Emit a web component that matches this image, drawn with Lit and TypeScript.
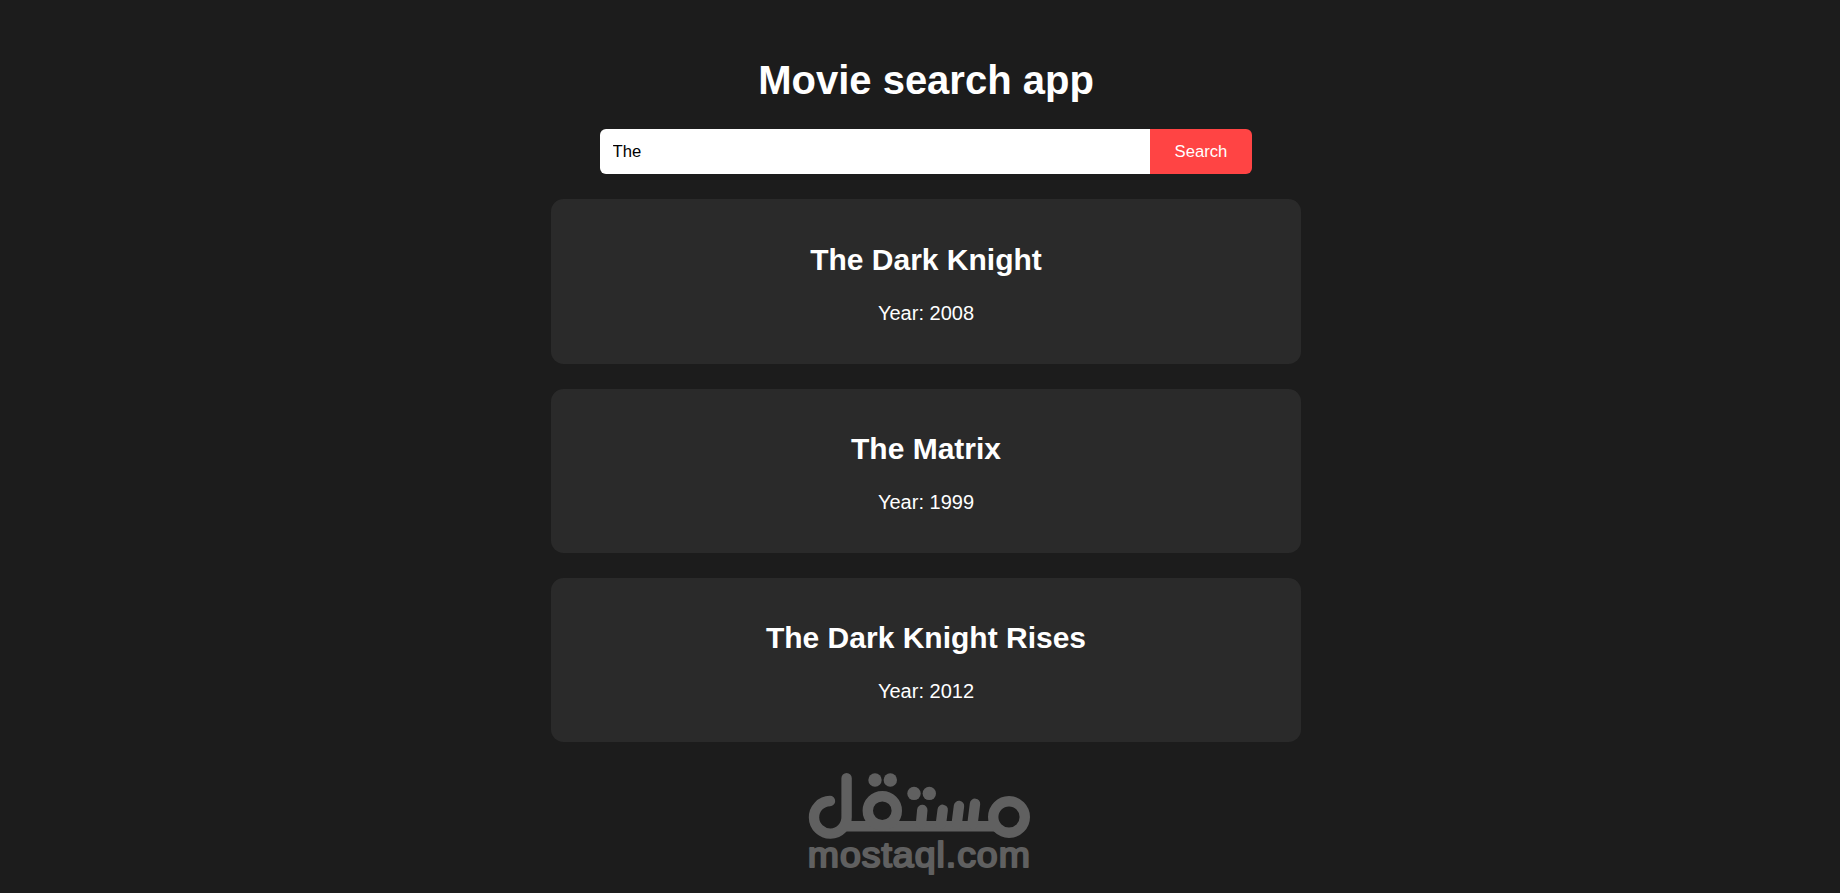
import { LitElement, html, css } from 'lit';
import { customElement, state } from 'lit/decorators.js';

interface Movie {
  title: string;
  year: number;
}

const MOVIES: Movie[] = [
  { title: 'The Dark Knight', year: 2008 },
  { title: 'Inception', year: 2010 },
  { title: 'The Matrix', year: 1999 },
  { title: 'Interstellar', year: 2014 },
  { title: 'The Dark Knight Rises', year: 2012 },
];

@customElement('mostaql-mark')
export class MostaqlMark extends LitElement {
  static styles = css`
    :host {
      display: block;
    }

    svg {
      display: block;
      overflow: visible;
    }

    .stroke {
      fill: none;
      stroke: #606060;
      stroke-width: 10.4;
      stroke-linecap: round;
      stroke-linejoin: round;
    }

    .bar {
      stroke-linecap: butt;
    }

    .dot {
      fill: #606060;
    }

    .name {
      fill: #606060;
      stroke: #606060;
      stroke-width: 2;
      stroke-linejoin: round;
      font: 34.4px 'Liberation Sans', Arial, sans-serif;
      letter-spacing: 0.9px;
    }
  `;

  render() {
    return html`
      <svg width="224" height="106" viewBox="0 0 224 106">
        <path class="stroke" d="M22 28A16.3 16.3 0 1 0 38.600 44V5.300" />
        <path class="stroke bar" d="M36 53.300H188" />
        <circle class="stroke" cx="74.300" cy="37.700" r="14.500" />
        <circle class="stroke" cx="201" cy="44" r="15.800" />
        <path class="stroke" d="M113 51L114.300 37M132.900 51L134.700 36.800M148.700 51L151 33M164.500 51L167 30.800" />
        <circle class="dot" cx="67" cy="7" r="6.700" />
        <circle class="dot" cx="82.300" cy="7" r="6.700" />
        <circle class="dot" cx="106" cy="20.400" r="6.700" />
        <circle class="dot" cx="121.300" cy="20.400" r="6.700" />
        <text class="name" x="-0.200" y="93.600" textLength="223" lengthAdjust="spacingAndGlyphs">mostaql.com</text>
      </svg>
    `;
  }
}

@customElement('app-root')
export class AppRoot extends LitElement {
  @state() query = 'The';
  @state() results: Movie[] = MOVIES.filter((m) => m.title.includes('The'));

  static styles = css`
    :host {
      display: block;
      box-sizing: border-box;
      height: 893px;
      padding: 57px 0 0 12px;
      overflow: hidden;
      background: #1c1c1c;
      color: #fff;
      font-family: 'Liberation Sans', Arial, sans-serif;
      text-align: center;
    }

    .container {
      width: 750px;
      margin: 0 auto;
    }

    h1 {
      margin: 0 0 26px;
      font-size: 40px;
      line-height: 46px;
    }

    .search {
      display: flex;
      width: 652px;
      height: 45px;
      margin: 0 auto 25.4px;
    }

    input,
    button {
      box-sizing: border-box;
      border: none;
      font-family: inherit;
      font-size: 16.67px;
    }

    input {
      flex: 1;
      min-width: 0;
      padding: 0 12.5px;
      border-radius: 6px 0 0 6px;
      background: #fff;
      color: #000;
      outline: none;
    }

    button {
      width: 102px;
      padding: 0;
      border-radius: 0 6px 6px 0;
      background: #ff4444;
      color: #fff;
      cursor: pointer;
    }

    .results {
      display: flex;
      flex-direction: column;
      gap: 25px;
    }

    .movie {
      box-sizing: border-box;
      height: 164.3px;
      padding-top: 43.3px;
      border-radius: 12.5px;
      background: #2a2a2a;
    }

    h2 {
      margin: 0 0 25px;
      font-size: 30px;
      line-height: 34px;
    }

    p {
      margin: 0;
      font-size: 20px;
      line-height: 23px;
    }

    mostaql-mark {
      width: 224px;
      margin: 30.7px 0 0 257px;
    }
  `;

  private search() {
    const q = this.query.trim().toLowerCase();
    this.results = MOVIES.filter((m) => m.title.toLowerCase().includes(q));
  }

  render() {
    return html`
      <div class="container">
        <h1>Movie search app</h1>

        <div class="search">
          <input
            type="text"
            .value=${this.query}
            @input=${(e: any) => (this.query = e.target.value)}
          />
          <button @click=${this.search}>Search</button>
        </div>

        <div class="results">
          ${this.results.map(
            (m) => html`
              <div class="movie">
                <h2>${m.title}</h2>
                <p>Year: ${m.year}</p>
              </div>
            `
          )}
        </div>

        <mostaql-mark></mostaql-mark>
      </div>
    `;
  }
}
